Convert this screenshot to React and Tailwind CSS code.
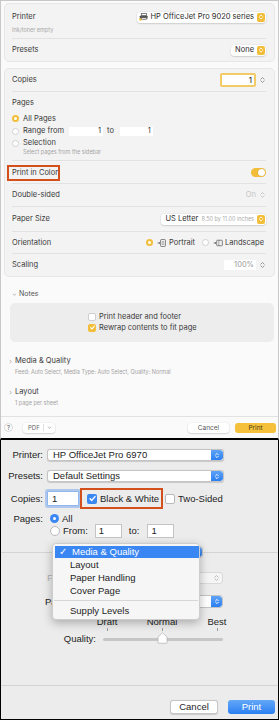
import React from "react";

const UpDown = ({ className = "", stroke = "white", sw = "1.2" }) => (
  <svg viewBox="0 0 8 10" className={className} fill="none" stroke={stroke} strokeWidth={sw} strokeLinecap="round" strokeLinejoin="round">
    <path d="M2.2 4 L4 2.2 L5.8 4" />
    <path d="M2.2 6 L4 7.8 L5.8 6" />
  </svg>
);

const YStep = () => (
  <span className="flex h-[9px] w-[8px] items-center justify-center rounded-[2px] bg-[#f2bd38]">
    <UpDown className="h-[8px] w-[6px]" />
  </span>
);

const GrayArrows = ({ color = "#8a8a8a" }) => (
  <UpDown className="h-[10px] w-[7px]" stroke={color} sw="1" />
);

const Check = ({ className = "" }) => (
  <svg viewBox="0 0 10 10" className={className} fill="none" stroke="white" strokeWidth="1.6" strokeLinecap="round" strokeLinejoin="round">
    <path d="M2.3 5.2 L4.2 7.1 L7.8 2.9" />
  </svg>
);

const PrinterIcon = () => (
  <svg viewBox="0 0 10 9" className="h-[8px] w-[9px]">
    <rect x="2.5" y="0.5" width="6" height="2.5" fill="#fff" stroke="#555" strokeWidth="0.8" />
    <rect x="0.8" y="3" width="8.8" height="3.5" rx="0.6" fill="#555" />
    <rect x="2.5" y="5.5" width="6" height="2" fill="#fff" stroke="#555" strokeWidth="0.7" />
    <circle cx="1.6" cy="7.4" r="1.4" fill="#f2bd38" />
  </svg>
);

const PortraitIcon = () => (
  <svg viewBox="0 0 10 9" className="h-[8px] w-[9px]" fill="none" stroke="#555" strokeWidth="0.8">
    <path d="M0.5 4.5 H3.2 M2.2 3.5 L3.2 4.5 L2.2 5.5" />
    <rect x="4" y="0.6" width="5.4" height="7.8" rx="0.8" />
    <path d="M5.4 3 H8 M5.4 4.5 H8 M5.4 6 H8" strokeWidth="0.5" />
  </svg>
);

const LandscapeIcon = () => (
  <svg viewBox="0 0 11 9" className="h-[8px] w-[10px]" fill="none" stroke="#555" strokeWidth="0.8">
    <path d="M0.5 4.5 H3.2 M2.2 3.5 L3.2 4.5 L2.2 5.5" />
    <rect x="4" y="1.4" width="6.4" height="6.2" rx="0.8" />
    <path d="M6.5 1.4 V7.6" strokeWidth="0.6" />
  </svg>
);

const Chevron = ({ dir = "right" }) =>
  dir === "right" ? (
    <svg viewBox="0 0 4 6" className="h-[5px] w-[3px]" fill="none" stroke="#9a9a9a" strokeWidth="0.9">
      <path d="M1 0.8 L3 3 L1 5.2" />
    </svg>
  ) : (
    <svg viewBox="0 0 6 4" className="h-[3px] w-[5px]" fill="none" stroke="#9a9a9a" strokeWidth="0.9">
      <path d="M0.8 1 L3 3 L5.2 1" />
    </svg>
  );

const Radio = ({ on }) =>
  on ? (
    <span className="flex h-[7px] w-[7px] shrink-0 items-center justify-center rounded-full bg-[#f2bd38]">
      <span className="h-[3px] w-[3px] rounded-full bg-white" />
    </span>
  ) : (
    <span className="block h-[7px] w-[7px] shrink-0 rounded-full border border-[#d2d2d2] bg-white" />
  );

function TopPanel() {
  return (
    <div className="flex h-[440px] flex-col border-x border-t border-b-2 border-x-[#c8c8c8] border-t-[#c8c8c8] border-b-black bg-[#fafafa] pt-[2px] font-['Inter',sans-serif] text-[7.5px] leading-[10px] text-[#3a3a3a]">
      <div className="flex flex-1 flex-col px-[3px]">
        {/* Card 1 */}
        <div className="h-[59px] rounded-[5px] border border-[#e7e7e7] bg-[#f3f3f3] pl-[7px] pr-[8px]">
          <div className="h-[35px] border-b border-[#e2e2e2] pt-[7px]">
            <div className="flex h-[12px] items-center justify-between">
              <span>Printer</span>
              <div className="flex h-[11px] items-center gap-[3px] rounded-[3px] bg-white pl-[2px] pr-[1px] shadow-[0_0.5px_1.5px_rgba(0,0,0,0.25)]">
                <PrinterIcon />
                <span className="text-[#2a2a2a]">HP OfficeJet Pro 9020 series</span>
                <YStep />
              </div>
            </div>
            <div className="mt-[3px] text-[5.5px] leading-[8px] text-[#a8a8a8]">Ink/toner empty</div>
          </div>
          <div className="flex h-[22px] items-center justify-between">
            <span>Presets</span>
            <div className="flex h-[11px] items-center gap-[3px] rounded-[3px] bg-white pl-[4px] pr-[1px] shadow-[0_0.5px_1.5px_rgba(0,0,0,0.25)]">
              <span className="text-[#2a2a2a]">None</span>
              <YStep />
            </div>
          </div>
        </div>

        {/* Card 2 */}
        <div className="mt-[6px] h-[209px] rounded-[5px] border border-[#e7e7e7] bg-[#f3f3f3] pl-[7px] pr-[8px]">
          <div className="flex h-[23px] items-center justify-between border-b border-[#e2e2e2]">
            <span>Copies</span>
            <div className="flex items-center gap-[3px]">
              <div className="flex h-[14px] w-[36px] items-center justify-end rounded-[2px] border-2 border-[#f3cb66] bg-white pr-[2px] text-[8px] text-[#111]">1</div>
              <GrayArrows />
            </div>
          </div>
          <div className="h-[69px] border-b border-[#e2e2e2] pt-[6px]">
            <div className="h-[10px]">Pages</div>
            <div className="mt-[4px] flex h-[13px] items-center gap-[4px]">
              <Radio on />
              <span>All Pages</span>
            </div>
            <div className="flex h-[12px] items-center">
              <Radio />
              <span className="ml-[4px] w-[46px]">Range from</span>
              <div className="flex h-[9px] w-[34px] items-center justify-end bg-white pr-[2px]">1</div>
              <span className="ml-[4px]">to</span>
              <div className="ml-[6px] flex h-[9px] w-[33px] items-center justify-end bg-white pr-[2px]">1</div>
            </div>
            <div className="flex h-[12px] items-center gap-[4px]">
              <Radio />
              <span>Selection</span>
            </div>
            <div className="pl-[11px] text-[5.5px] leading-[7px] text-[#a5a5a5]">Select pages from the sidebar</div>
          </div>
          <div className="flex h-[23px] items-center justify-between border-b border-[#e2e2e2]">
            <span className="-ml-[5px] mt-[2px] inline-flex h-[16px] w-[53px] items-center border-2 border-[#d3501d] pl-[3px]">Print in Color</span>
            <span className="flex h-[9px] w-[15px] items-center justify-end rounded-full bg-[#f2bd38] pr-[1px]">
              <span className="h-[7px] w-[7px] rounded-full bg-white shadow-[0_0_1px_rgba(0,0,0,0.3)]" />
            </span>
          </div>
          <div className="flex h-[23px] items-center justify-between border-b border-[#e2e2e2]">
            <span>Double-sided</span>
            <div className="flex items-center gap-[3px] text-[#c4c4c4]">
              <span>On</span>
              <GrayArrows color="#c4c4c4" />
            </div>
          </div>
          <div className="flex h-[25px] items-center justify-between border-b border-[#e2e2e2]">
            <span>Paper Size</span>
            <div className="flex h-[11px] items-center gap-[3px] rounded-[3px] bg-white pl-[4px] pr-[1px] shadow-[0_0.5px_1.5px_rgba(0,0,0,0.25)]">
              <span className="text-[#2a2a2a]">US Letter</span>
              <span className="text-[5.5px] text-[#ababab]">8.50 by 11.00 inches</span>
              <YStep />
            </div>
          </div>
          <div className="flex h-[22px] items-center justify-between border-b border-[#e2e2e2]">
            <span>Orientation</span>
            <div className="flex items-center pr-[2px]">
              <Radio on />
              <span className="ml-[4px] flex items-center"><PortraitIcon /></span>
              <span className="ml-[3px]">Portrait</span>
              <span className="ml-[7px] flex items-center"><Radio /></span>
              <span className="ml-[4px] flex items-center"><LandscapeIcon /></span>
              <span className="ml-[2px]">Landscape</span>
            </div>
          </div>
          <div className="flex h-[22px] items-center justify-between">
            <span>Scaling</span>
            <div className="flex items-center gap-[3px]">
              <div className="flex h-[10px] w-[32px] items-center justify-end bg-white pr-[2px] text-[#9a9a9a]">100%</div>
              <GrayArrows />
            </div>
          </div>
        </div>

        {/* Notes */}
        <div className="mt-[12px] flex h-[10px] items-center gap-[2px] pl-[8px] text-[7px] text-[#555]">
          <Chevron dir="down" />
          <span>Notes</span>
        </div>
        <div className="ml-[6px] mr-[1px] mt-[4px] h-[39px] rounded-[5px] bg-[#ededed] pl-[78px] pt-[9px]">
          <div className="flex h-[10px] items-center gap-[3px]">
            <span className="h-[8px] w-[8px] rounded-[2px] border border-[#cfcfcf] bg-white" />
            <span>Print header and footer</span>
          </div>
          <div className="flex h-[11px] items-center gap-[3px]">
            <span className="flex h-[8px] w-[8px] items-center justify-center rounded-[2px] bg-[#f2bd38]">
              <Check className="h-[7px] w-[7px]" />
            </span>
            <span>Rewrap contents to fit page</span>
          </div>
        </div>

        {/* Media & Quality */}
        <div className="mt-[14px] flex h-[10px] items-center gap-[3px] pl-[5px]">
          <Chevron />
          <span>Media &amp; Quality</span>
        </div>
        <div className="mt-[2px] pl-[11px] text-[5.5px] leading-[8px] text-[#a3a3a3]">Feed: Auto Select, Media Type: Auto Select, Quality: Normal</div>

        <div className="mt-[11px] flex h-[10px] items-center gap-[3px] pl-[5px]">
          <Chevron />
          <span>Layout</span>
        </div>
        <div className="mt-[2px] pl-[11px] text-[5.5px] leading-[8px] text-[#a3a3a3]">1 page per sheet</div>
        <div className="flex-1" />
      </div>

      {/* Footer */}
      <div className="flex h-[22px] items-center justify-between border-t border-[#e2e2e2] pl-[3px] pr-[2px]">
        <div className="flex items-center">
          <span className="flex h-[9px] w-[9px] items-center justify-center rounded-full border border-[#d6d6d6] bg-white text-[6px] leading-none text-[#555]">?</span>
          <span className="ml-[10px] flex h-[10px] w-[32px] items-center justify-between rounded-[3px] bg-white pl-[5px] pr-[3px] text-[6px] text-[#666] shadow-[0_0.5px_1.5px_rgba(0,0,0,0.25)]">
            <span>PDF</span>
            <span className="flex h-[7px] items-center border-l border-[#e0e0e0] pl-[3px]"><Chevron dir="down" /></span>
          </span>
        </div>
        <div className="flex items-center gap-[6px]">
          <span className="flex h-[10px] w-[41px] items-center justify-center rounded-[3px] bg-white text-[6.5px] text-[#555] shadow-[0_0.5px_1.5px_rgba(0,0,0,0.25)]">Cancel</span>
          <span className="flex h-[10px] w-[41px] items-center justify-center rounded-[3px] bg-[#f5c13c] text-[6.5px] text-[#4a3a10]">Print</span>
        </div>
      </div>
    </div>
  );
}

const BlueStep = ({ w = "w-[12px]" }) => (
  <span className={`flex h-full ${w} items-center justify-center rounded-r-[3px] bg-gradient-to-b from-[#5ea3f7] to-[#2b7ff1]`}>
    <UpDown className="h-[9px] w-[6px]" />
  </span>
);

function BottomPanel() {
  return (
    <div className="relative h-[280px] border-x border-b border-black bg-[#ececec] pt-[9px] font-['Liberation_Sans',sans-serif] text-[9.5px] leading-[12px] text-[#1d1d1d]">
      {/* Printer */}
      <div className="flex h-[12px] items-center">
        <span className="w-[42px] text-right">Printer:</span>
        <div className="ml-[4px] flex h-[12px] w-[177px] items-center justify-between overflow-hidden rounded-[3px] border border-[#c4c4c4] bg-white pl-[5px] shadow-[0_0.5px_1px_rgba(0,0,0,0.15)]">
          <span>HP OfficeJet Pro 6970</span>
          <BlueStep />
        </div>
      </div>
      {/* Presets */}
      <div className="mt-[9px] flex h-[12px] items-center">
        <span className="w-[42px] text-right">Presets:</span>
        <div className="ml-[4px] flex h-[12px] w-[177px] items-center justify-between overflow-hidden rounded-[3px] border border-[#c4c4c4] bg-white pl-[5px] shadow-[0_0.5px_1px_rgba(0,0,0,0.15)]">
          <span>Default Settings</span>
          <BlueStep />
        </div>
      </div>
      {/* Copies */}
      <div className="mt-[6px] flex h-[21px] items-center">
        <span className="w-[42px] text-right">Copies:</span>
        <div className="ml-[4px] flex h-[15px] w-[32px] items-center rounded-[1px] border border-[#8fb6ef] bg-white pl-[4px] shadow-[0_0_0_2px_rgba(100,155,235,0.45)]">1</div>
        <div className="ml-[1px] flex h-[21px] w-[83px] items-center gap-[3px] border-2 border-[#d3501d] pl-[5px]">
          <span className="flex h-[10px] w-[10px] items-center justify-center rounded-[2px] bg-[#3b88f4]">
            <Check className="h-[9px] w-[9px]" />
          </span>
          <span>Black &amp; White</span>
        </div>
        <span className="ml-[2px] h-[10px] w-[10px] rounded-[2px] border border-[#b9b9b9] bg-white" />
        <span className="ml-[3px]">Two-Sided</span>
      </div>
      {/* Pages */}
      <div className="mt-[4px] flex h-[11px] items-center">
        <span className="w-[42px] text-right">Pages:</span>
        <span className="ml-[7px] flex h-[9px] w-[9px] items-center justify-center rounded-full bg-[#3b88f4]">
          <span className="h-[3.5px] w-[3.5px] rounded-full bg-white" />
        </span>
        <span className="ml-[3px]">All</span>
      </div>
      <div className="flex h-[14px] items-center pl-[49px]">
        <span className="h-[10px] w-[10px] rounded-full border border-[#b9b9b9] bg-white" />
        <span className="ml-[3px]">From:</span>
        <div className="ml-[7px] flex h-[14px] w-[27px] items-center border border-[#c4c4c4] bg-white pl-[3px]">1</div>
        <span className="ml-[7px]">to:</span>
        <div className="ml-[8px] flex h-[14px] w-[27px] items-center border border-[#c4c4c4] bg-white pl-[3px]">1</div>
      </div>

      {/* separator with pane popup */}
      <div className="relative mt-[14px] h-px bg-[#d4d4d4]">
        <div className="absolute left-[51px] top-[-6px] flex h-[12px] w-[151px] items-center justify-between overflow-hidden rounded-[3px] border border-[#c4c4c4] bg-white pl-[18px]">
          <span>Media &amp; Quality</span>
          <BlueStep />
        </div>
      </div>

      {/* Feed row (disabled) */}
      <div className="mt-[19px] flex h-[12px] items-center">
        <span className="w-[95px] text-right text-[#b0b0b0]">Feed From:</span>
        <div className="ml-[4px] flex h-[12px] w-[123px] items-center justify-end rounded-[3px] border border-[#d9d9d9] bg-[#f5f5f5] pr-[2px]">
          <GrayArrows color="#b5b5b5" />
        </div>
      </div>
      {/* Paper type */}
      <div className="mt-[11px] flex h-[13px] items-center">
        <span className="w-[95px] text-right">Paper Type:</span>
        <div className="ml-[4px] flex h-[13px] w-[123px] items-center justify-end overflow-hidden rounded-[3px] border border-[#c4c4c4] bg-white">
          <BlueStep w="w-[11px]" />
        </div>
      </div>
      {/* Slider labels */}
      <div className="mt-[9px] flex h-[10px] items-center gap-[15px] pl-[86px] leading-[10px]">
        <span className="w-[40px] text-center">Draft</span>
        <span className="w-[40px] text-center">Normal</span>
        <span className="w-[40px] text-center">Best</span>
      </div>
      <div className="mt-[1px] flex h-[3px] gap-[15px] pl-[86px]">
        <span className="flex w-[40px] justify-center"><span className="h-[3px] w-px bg-[#9a9a9a]" /></span>
        <span className="flex w-[40px] justify-center"><span className="h-[3px] w-px bg-[#9a9a9a]" /></span>
        <span className="flex w-[40px] justify-center"><span className="h-[3px] w-px bg-[#9a9a9a]" /></span>
      </div>
      <div className="mt-[2px] flex h-[12px] items-center">
        <span className="w-[95px] text-right">Quality:</span>
        <div className="relative ml-[7px] h-[3px] w-[120px] rounded-full bg-[#c6c6c6]">
          <svg viewBox="0 0 11 12" className="absolute left-[54px] top-[-6px] h-[12px] w-[11px]">
            <path d="M1 5 L5.5 0.8 L10 5 V10.6 Q10 11.3 9.3 11.3 H1.7 Q1 11.3 1 10.6 Z" fill="#fff" stroke="#b0b0b0" strokeWidth="0.7" />
          </svg>
        </div>
      </div>

      <div className="mt-[40px] h-px bg-[#d4d4d4]" />
      <div className="mt-[14px] flex h-[14px] items-center justify-end gap-[10px] pr-[3px]">
        <span className="flex h-[14px] w-[48px] items-center justify-center rounded-[3px] border border-[#c6c6c6] bg-white shadow-[0_0.5px_1px_rgba(0,0,0,0.15)]">Cancel</span>
        <span className="flex h-[14px] w-[47px] items-center justify-center rounded-[3px] bg-gradient-to-b from-[#63a7f8] to-[#2a7ff2] text-white">Print</span>
      </div>

      {/* Popup menu overlay */}
      <div className="absolute left-[51px] top-[103px] h-[77px] w-[148px] rounded-[4px] border border-[#cdcdcd] bg-[#f6f6f6] pt-[2px] shadow-[0_3px_10px_rgba(0,0,0,0.28)]">
        <div className="ml-[2px] flex h-[12px] items-center bg-[#3a86f2] pl-[4px] text-white">
          <span className="w-[13px]">✓</span>
          <span>Media &amp; Quality</span>
        </div>
        <div className="flex h-[13px] items-center pl-[17px]">Layout</div>
        <div className="flex h-[13px] items-center pl-[17px]">Paper Handling</div>
        <div className="flex h-[13px] items-center pl-[17px]">Cover Page</div>
        <div className="flex h-[7px] items-center px-[1px]"><div className="h-px w-full bg-[#d6d6d6]" /></div>
        <div className="flex h-[13px] items-center pl-[17px]">Supply Levels</div>
      </div>
    </div>
  );
}

export default function App() {
  return (
    <div className="w-[279px] bg-white">
      <TopPanel />
      <BottomPanel />
    </div>
  );
}
